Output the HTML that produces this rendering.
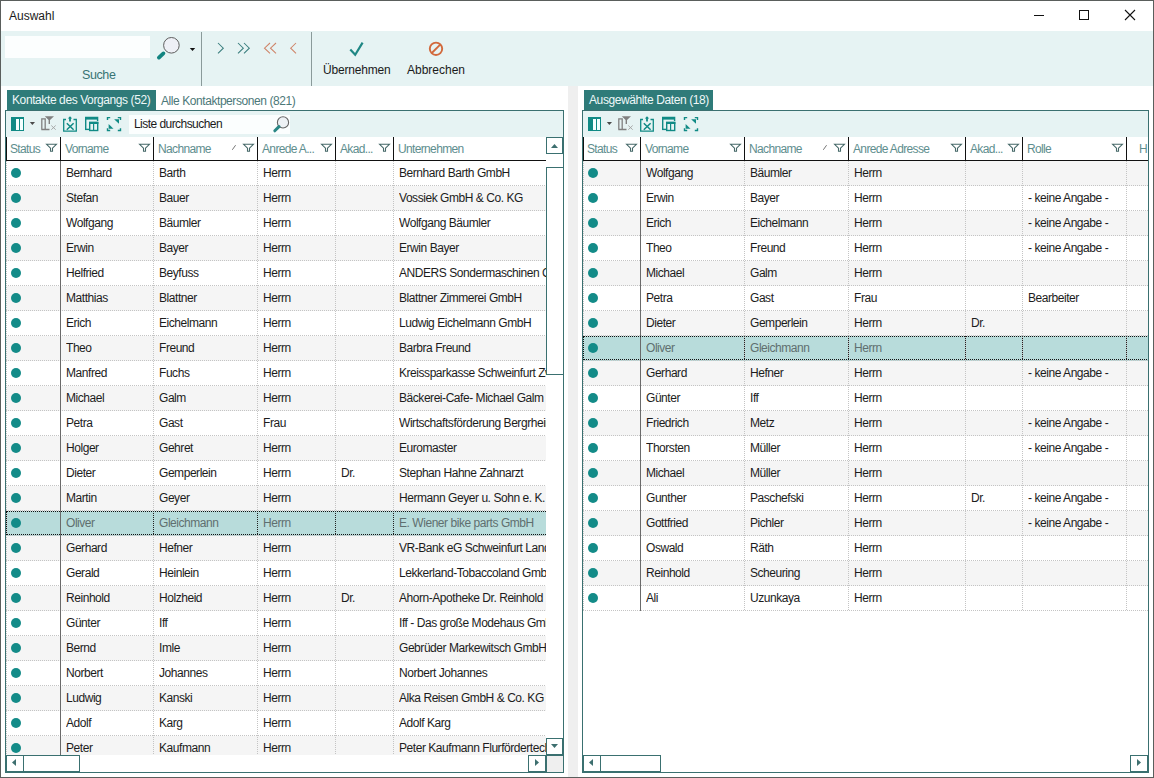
<!DOCTYPE html><html><head><meta charset="utf-8"><style>
*{margin:0;padding:0;box-sizing:border-box}
html,body{width:1154px;height:778px;overflow:hidden;background:#fff}
body{position:relative;font-family:"Liberation Sans",sans-serif;font-size:12px;color:#1e1e1e}
.a{position:absolute}
.ic{position:absolute;overflow:visible}
.hd{position:absolute;height:23px;line-height:24px;padding-left:5px;color:#5e8e8e;white-space:nowrap;overflow:hidden;letter-spacing:-0.65px}
.cell{position:absolute;height:25px;line-height:24px;white-space:nowrap;overflow:hidden;letter-spacing:-0.45px}
.dh{height:1px;background-image:linear-gradient(to right,#c4c4c4 50%,transparent 50%);background-size:2px 1px}
.dv{width:1px;background-image:linear-gradient(to bottom,#c4c4c4 50%,transparent 50%);background-size:1px 2px}
.dvk{width:1px;background-image:linear-gradient(to bottom,#222 50%,transparent 50%);background-size:1px 2px}
.dot{width:10px;height:10px;border-radius:50%;background:#138b88}
.tab{height:20px;line-height:21px;background:#2f7b79;color:#eef8f8;padding-left:5px;letter-spacing:-0.4px;white-space:nowrap}
</style></head><body><div class="a" style="left:9px;top:9px;line-height:14px;color:#1a1a1a">Auswahl</div><svg class="ic" style="left:1032px;top:8px" width="14" height="14" viewBox="0 0 14 14"><path d="M2 7.5 H12" stroke="#111" stroke-width="1"/></svg><svg class="ic" style="left:1077px;top:8px" width="14" height="14" viewBox="0 0 14 14"><rect x="2.5" y="2.5" width="9" height="9" fill="none" stroke="#111" stroke-width="1"/></svg><svg class="ic" style="left:1122px;top:8px" width="16" height="16" viewBox="0 0 16 16"><path d="M3 2 L13 12 M13 2 L3 12" stroke="#111" stroke-width="1.1"/></svg><div class="a" style="left:1px;top:31px;width:1152px;height:55px;background:#e6f3f3"></div><div class="a" style="left:5px;top:36px;width:145px;height:22px;background:#fcfefe"></div><div class="a" style="left:82px;top:68px;line-height:14px;color:#387474;font-size:12.5px;letter-spacing:-0.4px">Suche</div><svg class="ic" style="left:152px;top:34px" width="48" height="30" viewBox="0 0 48 30"><circle cx="19.4" cy="11.3" r="7.8" fill="#eef0f6" stroke="#5e5e5e" stroke-width="1"/><path d="M11.4 19.4 L6.9 23.6" stroke="#128480" stroke-width="3.8" stroke-linecap="round"/><path d="M37.8 14 H43.2 L40.5 16.9 Z" fill="#111"/></svg><div class="a" style="left:201px;top:32px;width:1px;height:54px;background:#8a9a9a"></div><div class="a" style="left:311px;top:32px;width:1px;height:54px;background:#8a9a9a"></div><svg class="ic" style="left:212px;top:40px" width="90" height="16" viewBox="0 0 90 16"><g fill="none" stroke-width="1.05"><path d="M6 3 L11.3 8.2 L6 13.4" stroke="#3b7f7f"/><path d="M26 3 L31.3 8.2 L26 13.4 M32 3 L37.3 8.2 L32 13.4" stroke="#3b7f7f"/><path d="M58 3 L52.5 8.2 L58 13.4 M64 3 L58.5 8.2 L64 13.4" stroke="#cf8468"/><path d="M84 3 L78.7 8.2 L84 13.4" stroke="#cf8468"/></g></svg><svg class="ic" style="left:345px;top:39px" width="20" height="18" viewBox="0 0 20 18"><path d="M5.3 10.4 L10.2 15.7 L17.6 3.6" fill="none" stroke="#1f8784" stroke-width="2.2"/></svg><div class="a" style="left:323px;top:63px;line-height:14px;color:#1a1a1a;letter-spacing:-0.2px">Übernehmen</div><svg class="ic" style="left:426px;top:39px" width="20" height="18" viewBox="0 0 20 18"><circle cx="10" cy="9.8" r="6.2" fill="none" stroke="#d2693c" stroke-width="1.9"/><path d="M5.8 14 L14.2 5.6" stroke="#d2693c" stroke-width="1.9"/></svg><div class="a" style="left:407px;top:63px;line-height:14px;color:#1a1a1a">Abbrechen</div><div class="a" style="left:568px;top:86px;width:10px;height:691px;background:#efefef"></div><div class="a" style="left:5px;top:110px;width:559px;height:663px;border:1px solid #3a7070;background:#fff"></div><div class="a" style="left:6px;top:111px;width:557px;height:26px;background:#e6f3f3"></div><svg class="ic" style="left:11px;top:116px" width="112" height="16" viewBox="0 0 112 16"><rect x="0" y="1" width="13" height="14" fill="#108a85"/><rect x="5" y="3" width="3" height="11" fill="#f4ffff"/><rect x="9" y="3" width="3" height="11" fill="#f4ffff"/><path d="M18.8 6 H24 L21.4 9 Z" fill="#4a4a4a"/><path d="M30.8 13.5 V2.8 H34.2 V13.5 M30.3 13.5 H38.5" fill="none" stroke="#808080" stroke-width="1.3"/><path d="M33.8 0.2 H43 L39 4 V8 L37.6 8 V4 Z" fill="#808080"/><path d="M40.3 9.5 L44.7 13.7 M44.7 9.5 L40.3 13.7" stroke="#a0a0a0" stroke-width="0.9"/><path d="M55 3.5 H52.7 V15.2 H65.3 V3.5 H62.5" fill="none" stroke="#108a85" stroke-width="1.3"/><path d="M59 0.2 L61.2 2.6 H59.9 V5.5 H58.1 V2.6 H56.8 Z" fill="#108a85"/><path d="M55.8 7.2 L62.6 13.8 M62.6 7.2 L55.8 13.8" stroke="#108a85" stroke-width="1.5"/><path d="M74.7 13.5 V1.5 H86.6 V5" fill="none" stroke="#108a85" stroke-width="1.4"/><rect x="74" y="1" width="13" height="2.6" fill="#108a85"/><path d="M74 13.4 H78" stroke="#108a85" stroke-width="1.4"/><rect x="78.7" y="6.5" width="8" height="8" fill="none" stroke="#108a85" stroke-width="1.4"/><rect x="78" y="5.8" width="9.4" height="2.2" fill="#108a85"/><path d="M82.6 7 V14.5" stroke="#108a85" stroke-width="1.2"/><path d="M96.5 4 V1.6 H99.2 M106.8 1.6 H109.5 V4 M109.5 12.2 V14.5 H106.8 M99.2 14.5 H96.5 V12.2" fill="none" stroke="#108a85" stroke-width="1.4"/><path d="M103.1 3.3 H108 V7.8 Z" fill="#108a85"/><path d="M97.6 8.1 V12.8 H102.5 Z" fill="#108a85"/></svg><div class="a" style="left:129px;top:115px;width:161px;height:19px;background:#fbfefe"></div><div class="a" style="left:134px;top:116px;line-height:17px;color:#1a1a1a;letter-spacing:-0.55px">Liste durchsuchen</div><svg class="ic" style="left:270px;top:114px" width="20" height="20" viewBox="0 0 20 20"><circle cx="13" cy="8.4" r="5.6" fill="#eef2f5" stroke="#666" stroke-width="1.1"/><path d="M9 12.6 L4.8 16.8" stroke="#2a8785" stroke-width="3" stroke-linecap="round"/></svg><div class="a" style="left:6px;top:161px;width:540px;height:594px;overflow:hidden"><div class="a" style="left:0px;top:0px;width:548px;height:25px;background:#fff"></div><div class="a dh" style="left:0;top:24px;width:548px"></div><div class="a dot" style="left:5px;top:7px"></div><div class="cell" style="left:60px;top:0px;width:87px;color:#1c1c1c">Bernhard</div><div class="cell" style="left:153px;top:0px;width:98px;color:#1c1c1c">Barth</div><div class="cell" style="left:257px;top:0px;width:72px;color:#1c1c1c">Herrn</div><div class="cell" style="left:393px;top:0px;width:154px;color:#1c1c1c">Bernhard Barth GmbH</div><div class="a" style="left:0px;top:25px;width:548px;height:25px;background:#f5f5f5"></div><div class="a dh" style="left:0;top:49px;width:548px"></div><div class="a dot" style="left:5px;top:32px"></div><div class="cell" style="left:60px;top:25px;width:87px;color:#1c1c1c">Stefan</div><div class="cell" style="left:153px;top:25px;width:98px;color:#1c1c1c">Bauer</div><div class="cell" style="left:257px;top:25px;width:72px;color:#1c1c1c">Herrn</div><div class="cell" style="left:393px;top:25px;width:154px;color:#1c1c1c">Vossiek GmbH &amp; Co. KG</div><div class="a" style="left:0px;top:50px;width:548px;height:25px;background:#fff"></div><div class="a dh" style="left:0;top:74px;width:548px"></div><div class="a dot" style="left:5px;top:57px"></div><div class="cell" style="left:60px;top:50px;width:87px;color:#1c1c1c">Wolfgang</div><div class="cell" style="left:153px;top:50px;width:98px;color:#1c1c1c">Bäumler</div><div class="cell" style="left:257px;top:50px;width:72px;color:#1c1c1c">Herrn</div><div class="cell" style="left:393px;top:50px;width:154px;color:#1c1c1c">Wolfgang Bäumler</div><div class="a" style="left:0px;top:75px;width:548px;height:25px;background:#f5f5f5"></div><div class="a dh" style="left:0;top:99px;width:548px"></div><div class="a dot" style="left:5px;top:82px"></div><div class="cell" style="left:60px;top:75px;width:87px;color:#1c1c1c">Erwin</div><div class="cell" style="left:153px;top:75px;width:98px;color:#1c1c1c">Bayer</div><div class="cell" style="left:257px;top:75px;width:72px;color:#1c1c1c">Herrn</div><div class="cell" style="left:393px;top:75px;width:154px;color:#1c1c1c">Erwin Bayer</div><div class="a" style="left:0px;top:100px;width:548px;height:25px;background:#fff"></div><div class="a dh" style="left:0;top:124px;width:548px"></div><div class="a dot" style="left:5px;top:107px"></div><div class="cell" style="left:60px;top:100px;width:87px;color:#1c1c1c">Helfried</div><div class="cell" style="left:153px;top:100px;width:98px;color:#1c1c1c">Beyfuss</div><div class="cell" style="left:257px;top:100px;width:72px;color:#1c1c1c">Herrn</div><div class="cell" style="left:393px;top:100px;width:154px;color:#1c1c1c">ANDERS Sondermaschinen GmbH</div><div class="a" style="left:0px;top:125px;width:548px;height:25px;background:#f5f5f5"></div><div class="a dh" style="left:0;top:149px;width:548px"></div><div class="a dot" style="left:5px;top:132px"></div><div class="cell" style="left:60px;top:125px;width:87px;color:#1c1c1c">Matthias</div><div class="cell" style="left:153px;top:125px;width:98px;color:#1c1c1c">Blattner</div><div class="cell" style="left:257px;top:125px;width:72px;color:#1c1c1c">Herrn</div><div class="cell" style="left:393px;top:125px;width:154px;color:#1c1c1c">Blattner Zimmerei GmbH</div><div class="a" style="left:0px;top:150px;width:548px;height:25px;background:#fff"></div><div class="a dh" style="left:0;top:174px;width:548px"></div><div class="a dot" style="left:5px;top:157px"></div><div class="cell" style="left:60px;top:150px;width:87px;color:#1c1c1c">Erich</div><div class="cell" style="left:153px;top:150px;width:98px;color:#1c1c1c">Eichelmann</div><div class="cell" style="left:257px;top:150px;width:72px;color:#1c1c1c">Herrn</div><div class="cell" style="left:393px;top:150px;width:154px;color:#1c1c1c">Ludwig Eichelmann GmbH</div><div class="a" style="left:0px;top:175px;width:548px;height:25px;background:#f5f5f5"></div><div class="a dh" style="left:0;top:199px;width:548px"></div><div class="a dot" style="left:5px;top:182px"></div><div class="cell" style="left:60px;top:175px;width:87px;color:#1c1c1c">Theo</div><div class="cell" style="left:153px;top:175px;width:98px;color:#1c1c1c">Freund</div><div class="cell" style="left:257px;top:175px;width:72px;color:#1c1c1c">Herrn</div><div class="cell" style="left:393px;top:175px;width:154px;color:#1c1c1c">Barbra Freund</div><div class="a" style="left:0px;top:200px;width:548px;height:25px;background:#fff"></div><div class="a dh" style="left:0;top:224px;width:548px"></div><div class="a dot" style="left:5px;top:207px"></div><div class="cell" style="left:60px;top:200px;width:87px;color:#1c1c1c">Manfred</div><div class="cell" style="left:153px;top:200px;width:98px;color:#1c1c1c">Fuchs</div><div class="cell" style="left:257px;top:200px;width:72px;color:#1c1c1c">Herrn</div><div class="cell" style="left:393px;top:200px;width:154px;color:#1c1c1c">Kreissparkasse Schweinfurt Zweigstelle</div><div class="a" style="left:0px;top:225px;width:548px;height:25px;background:#f5f5f5"></div><div class="a dh" style="left:0;top:249px;width:548px"></div><div class="a dot" style="left:5px;top:232px"></div><div class="cell" style="left:60px;top:225px;width:87px;color:#1c1c1c">Michael</div><div class="cell" style="left:153px;top:225px;width:98px;color:#1c1c1c">Galm</div><div class="cell" style="left:257px;top:225px;width:72px;color:#1c1c1c">Herrn</div><div class="cell" style="left:393px;top:225px;width:154px;color:#1c1c1c">Bäckerei-Cafe- Michael Galm</div><div class="a" style="left:0px;top:250px;width:548px;height:25px;background:#fff"></div><div class="a dh" style="left:0;top:274px;width:548px"></div><div class="a dot" style="left:5px;top:257px"></div><div class="cell" style="left:60px;top:250px;width:87px;color:#1c1c1c">Petra</div><div class="cell" style="left:153px;top:250px;width:98px;color:#1c1c1c">Gast</div><div class="cell" style="left:257px;top:250px;width:72px;color:#1c1c1c">Frau</div><div class="cell" style="left:393px;top:250px;width:154px;color:#1c1c1c">Wirtschaftsförderung  Bergrheinfeld</div><div class="a" style="left:0px;top:275px;width:548px;height:25px;background:#f5f5f5"></div><div class="a dh" style="left:0;top:299px;width:548px"></div><div class="a dot" style="left:5px;top:282px"></div><div class="cell" style="left:60px;top:275px;width:87px;color:#1c1c1c">Holger</div><div class="cell" style="left:153px;top:275px;width:98px;color:#1c1c1c">Gehret</div><div class="cell" style="left:257px;top:275px;width:72px;color:#1c1c1c">Herrn</div><div class="cell" style="left:393px;top:275px;width:154px;color:#1c1c1c">Euromaster</div><div class="a" style="left:0px;top:300px;width:548px;height:25px;background:#fff"></div><div class="a dh" style="left:0;top:324px;width:548px"></div><div class="a dot" style="left:5px;top:307px"></div><div class="cell" style="left:60px;top:300px;width:87px;color:#1c1c1c">Dieter</div><div class="cell" style="left:153px;top:300px;width:98px;color:#1c1c1c">Gemperlein</div><div class="cell" style="left:257px;top:300px;width:72px;color:#1c1c1c">Herrn</div><div class="cell" style="left:335px;top:300px;width:52px;color:#1c1c1c">Dr.</div><div class="cell" style="left:393px;top:300px;width:154px;color:#1c1c1c">Stephan Hahne Zahnarzt</div><div class="a" style="left:0px;top:325px;width:548px;height:25px;background:#f5f5f5"></div><div class="a dh" style="left:0;top:349px;width:548px"></div><div class="a dot" style="left:5px;top:332px"></div><div class="cell" style="left:60px;top:325px;width:87px;color:#1c1c1c">Martin</div><div class="cell" style="left:153px;top:325px;width:98px;color:#1c1c1c">Geyer</div><div class="cell" style="left:257px;top:325px;width:72px;color:#1c1c1c">Herrn</div><div class="cell" style="left:393px;top:325px;width:154px;color:#1c1c1c">Hermann Geyer u. Sohn e. K.</div><div class="a" style="left:0px;top:350px;width:548px;height:25px;background:#b8dcdb"></div><div class="a dh" style="left:0;top:374px;width:548px"></div><div class="a dot" style="left:5px;top:357px"></div><div class="cell" style="left:60px;top:350px;width:87px;color:#5f6f6f">Oliver</div><div class="cell" style="left:153px;top:350px;width:98px;color:#5f6f6f">Gleichmann</div><div class="cell" style="left:257px;top:350px;width:72px;color:#5f6f6f">Herrn</div><div class="cell" style="left:393px;top:350px;width:154px;color:#5f6f6f">E. Wiener bike parts GmbH</div><div class="a" style="left:0px;top:375px;width:548px;height:25px;background:#f5f5f5"></div><div class="a dh" style="left:0;top:399px;width:548px"></div><div class="a dot" style="left:5px;top:382px"></div><div class="cell" style="left:60px;top:375px;width:87px;color:#1c1c1c">Gerhard</div><div class="cell" style="left:153px;top:375px;width:98px;color:#1c1c1c">Hefner</div><div class="cell" style="left:257px;top:375px;width:72px;color:#1c1c1c">Herrn</div><div class="cell" style="left:393px;top:375px;width:154px;color:#1c1c1c">VR-Bank eG Schweinfurt Land</div><div class="a" style="left:0px;top:400px;width:548px;height:25px;background:#fff"></div><div class="a dh" style="left:0;top:424px;width:548px"></div><div class="a dot" style="left:5px;top:407px"></div><div class="cell" style="left:60px;top:400px;width:87px;color:#1c1c1c">Gerald</div><div class="cell" style="left:153px;top:400px;width:98px;color:#1c1c1c">Heinlein</div><div class="cell" style="left:257px;top:400px;width:72px;color:#1c1c1c">Herrn</div><div class="cell" style="left:393px;top:400px;width:154px;color:#1c1c1c">Lekkerland-Tobaccoland GmbH</div><div class="a" style="left:0px;top:425px;width:548px;height:25px;background:#f5f5f5"></div><div class="a dh" style="left:0;top:449px;width:548px"></div><div class="a dot" style="left:5px;top:432px"></div><div class="cell" style="left:60px;top:425px;width:87px;color:#1c1c1c">Reinhold</div><div class="cell" style="left:153px;top:425px;width:98px;color:#1c1c1c">Holzheid</div><div class="cell" style="left:257px;top:425px;width:72px;color:#1c1c1c">Herrn</div><div class="cell" style="left:335px;top:425px;width:52px;color:#1c1c1c">Dr.</div><div class="cell" style="left:393px;top:425px;width:154px;color:#1c1c1c">Ahorn-Apotheke Dr. Reinhold</div><div class="a" style="left:0px;top:450px;width:548px;height:25px;background:#fff"></div><div class="a dh" style="left:0;top:474px;width:548px"></div><div class="a dot" style="left:5px;top:457px"></div><div class="cell" style="left:60px;top:450px;width:87px;color:#1c1c1c">Günter</div><div class="cell" style="left:153px;top:450px;width:98px;color:#1c1c1c">Iff</div><div class="cell" style="left:257px;top:450px;width:72px;color:#1c1c1c">Herrn</div><div class="cell" style="left:393px;top:450px;width:154px;color:#1c1c1c">Iff - Das große Modehaus GmbH</div><div class="a" style="left:0px;top:475px;width:548px;height:25px;background:#f5f5f5"></div><div class="a dh" style="left:0;top:499px;width:548px"></div><div class="a dot" style="left:5px;top:482px"></div><div class="cell" style="left:60px;top:475px;width:87px;color:#1c1c1c">Bernd</div><div class="cell" style="left:153px;top:475px;width:98px;color:#1c1c1c">Imle</div><div class="cell" style="left:257px;top:475px;width:72px;color:#1c1c1c">Herrn</div><div class="cell" style="left:393px;top:475px;width:154px;color:#1c1c1c">Gebrüder Markewitsch GmbH</div><div class="a" style="left:0px;top:500px;width:548px;height:25px;background:#fff"></div><div class="a dh" style="left:0;top:524px;width:548px"></div><div class="a dot" style="left:5px;top:507px"></div><div class="cell" style="left:60px;top:500px;width:87px;color:#1c1c1c">Norbert</div><div class="cell" style="left:153px;top:500px;width:98px;color:#1c1c1c">Johannes</div><div class="cell" style="left:257px;top:500px;width:72px;color:#1c1c1c">Herrn</div><div class="cell" style="left:393px;top:500px;width:154px;color:#1c1c1c">Norbert Johannes</div><div class="a" style="left:0px;top:525px;width:548px;height:25px;background:#f5f5f5"></div><div class="a dh" style="left:0;top:549px;width:548px"></div><div class="a dot" style="left:5px;top:532px"></div><div class="cell" style="left:60px;top:525px;width:87px;color:#1c1c1c">Ludwig</div><div class="cell" style="left:153px;top:525px;width:98px;color:#1c1c1c">Kanski</div><div class="cell" style="left:257px;top:525px;width:72px;color:#1c1c1c">Herrn</div><div class="cell" style="left:393px;top:525px;width:154px;color:#1c1c1c">Alka Reisen GmbH &amp; Co. KG</div><div class="a" style="left:0px;top:550px;width:548px;height:25px;background:#fff"></div><div class="a dh" style="left:0;top:574px;width:548px"></div><div class="a dot" style="left:5px;top:557px"></div><div class="cell" style="left:60px;top:550px;width:87px;color:#1c1c1c">Adolf</div><div class="cell" style="left:153px;top:550px;width:98px;color:#1c1c1c">Karg</div><div class="cell" style="left:257px;top:550px;width:72px;color:#1c1c1c">Herrn</div><div class="cell" style="left:393px;top:550px;width:154px;color:#1c1c1c">Adolf Karg</div><div class="a" style="left:0px;top:575px;width:548px;height:25px;background:#f5f5f5"></div><div class="a dh" style="left:0;top:599px;width:548px"></div><div class="a dot" style="left:5px;top:582px"></div><div class="cell" style="left:60px;top:575px;width:87px;color:#1c1c1c">Peter</div><div class="cell" style="left:153px;top:575px;width:98px;color:#1c1c1c">Kaufmann</div><div class="cell" style="left:257px;top:575px;width:72px;color:#1c1c1c">Herrn</div><div class="cell" style="left:393px;top:575px;width:154px;color:#1c1c1c">Peter Kaufmann Flurfördertechnik</div><div class="a" style="left:54px;top:0px;width:1px;height:600px;background:#6a6a6a"></div><div class="a dv" style="left:147px;top:0;height:600px"></div><div class="a dv" style="left:251px;top:0;height:600px"></div><div class="a dv" style="left:329px;top:0;height:600px"></div><div class="a dv" style="left:387px;top:0;height:600px"></div><div class="a dv" style="left:547px;top:0;height:600px"></div><div class="a dv" style="left:0px;top:0;height:600px"></div><div class="a" style="left:0px;top:350px;width:548px;height:24px;border:1px dotted #111"></div><div class="a dvk" style="left:147px;top:350px;height:24px"></div><div class="a dvk" style="left:251px;top:350px;height:24px"></div><div class="a dvk" style="left:329px;top:350px;height:24px"></div><div class="a dvk" style="left:387px;top:350px;height:24px"></div></div><div class="a" style="left:6px;top:137px;width:540px;height:23px;background:#fff"></div><div class="a" style="left:6px;top:160px;width:540px;height:1px;background:#111"></div><div class="a" style="left:6px;top:137px;width:1px;height:24px;background:#111"></div><div class="hd" style="left:6px;top:137px;width:35px;padding-left:4px">Status</div><svg class="ic" style="left:46px;top:143px" width="12" height="10" viewBox="0 0 12 10"><path d="M0.6 1.3 H10.4 L6.5 5.2 V8.3 H4.5 V5.2 Z" fill="none" stroke="#456868" stroke-width="1.1" stroke-linejoin="miter"/></svg><div class="a" style="left:60px;top:137px;width:1px;height:24px;background:#111"></div><div class="hd" style="left:60px;top:137px;width:74px;">Vorname</div><svg class="ic" style="left:139px;top:143px" width="12" height="10" viewBox="0 0 12 10"><path d="M0.6 1.3 H10.4 L6.5 5.2 V8.3 H4.5 V5.2 Z" fill="none" stroke="#456868" stroke-width="1.1" stroke-linejoin="miter"/></svg><div class="a" style="left:153px;top:137px;width:1px;height:24px;background:#111"></div><div class="hd" style="left:153px;top:137px;width:85px;">Nachname</div><svg class="ic" style="left:243px;top:143px" width="12" height="10" viewBox="0 0 12 10"><path d="M0.6 1.3 H10.4 L6.5 5.2 V8.3 H4.5 V5.2 Z" fill="none" stroke="#456868" stroke-width="1.1" stroke-linejoin="miter"/></svg><svg class="ic" style="left:232px;top:144px" width="6" height="7" viewBox="0 0 6 7"><path d="M0.3 5.8 L3.6 1.2" stroke="#777" stroke-width="1"/></svg><div class="a" style="left:257px;top:137px;width:1px;height:24px;background:#111"></div><div class="hd" style="left:257px;top:137px;width:59px;">Anrede A...</div><svg class="ic" style="left:321px;top:143px" width="12" height="10" viewBox="0 0 12 10"><path d="M0.6 1.3 H10.4 L6.5 5.2 V8.3 H4.5 V5.2 Z" fill="none" stroke="#456868" stroke-width="1.1" stroke-linejoin="miter"/></svg><div class="a" style="left:335px;top:137px;width:1px;height:24px;background:#111"></div><div class="hd" style="left:335px;top:137px;width:39px;">Akad...</div><svg class="ic" style="left:379px;top:143px" width="12" height="10" viewBox="0 0 12 10"><path d="M0.6 1.3 H10.4 L6.5 5.2 V8.3 H4.5 V5.2 Z" fill="none" stroke="#456868" stroke-width="1.1" stroke-linejoin="miter"/></svg><div class="a" style="left:393px;top:137px;width:1px;height:24px;background:#111"></div><div class="hd" style="left:393px;top:137px;width:158px;">Unternehmen</div><div class="a" style="left:546px;top:137px;width:17px;height:17px;border:1px solid #3a7070;background:#fff"></div><svg class="ic" style="left:551px;top:144px" width="7" height="4" viewBox="0 0 7 4"><path d="M0 4 L3.5 0 L7 4 Z" fill="#3d6f6f"/></svg><div class="a" style="left:546px;top:167px;width:17px;height:208px;border:1px solid #3a7070;border-right:0;background:#fff"></div><div class="a" style="left:546px;top:738px;width:17px;height:17px;border:1px solid #3a7070;background:#fff"></div><svg class="ic" style="left:551px;top:744px" width="7" height="4" viewBox="0 0 7 4"><path d="M0 0 L7 0 L3.5 4 Z" fill="#3d6f6f"/></svg><div class="a" style="left:546px;top:755px;width:17px;height:17px;background:#efefef;border-left:1px solid #3a7070;border-top:1px solid #3a7070"></div><div class="a" style="left:6px;top:755px;width:540px;height:17px;background:#fff"></div><div class="a" style="left:6px;top:755px;width:18px;height:17px;border:1px solid #3a7070;background:#fff"></div><svg class="ic" style="left:12px;top:759px" width="4" height="7" viewBox="0 0 4 7"><path d="M4 0 L4 7 L0 3.5 Z" fill="#3d6f6f"/></svg><div class="a" style="left:23px;top:755px;width:57px;height:17px;border:1px solid #3a7070;background:#fff"></div><div class="a" style="left:528px;top:755px;width:18px;height:17px;border:1px solid #3a7070;background:#fff"></div><svg class="ic" style="left:535px;top:759px" width="4" height="7" viewBox="0 0 4 7"><path d="M0 0 L4 3.5 L0 7 Z" fill="#3d6f6f"/></svg><div class="a" style="left:582px;top:110px;width:567px;height:663px;border:1px solid #3a7070;background:#fff"></div><div class="a" style="left:583px;top:111px;width:565px;height:26px;background:#e6f3f3"></div><svg class="ic" style="left:588px;top:116px" width="112" height="16" viewBox="0 0 112 16"><rect x="0" y="1" width="13" height="14" fill="#108a85"/><rect x="5" y="3" width="3" height="11" fill="#f4ffff"/><rect x="9" y="3" width="3" height="11" fill="#f4ffff"/><path d="M18.8 6 H24 L21.4 9 Z" fill="#4a4a4a"/><path d="M30.8 13.5 V2.8 H34.2 V13.5 M30.3 13.5 H38.5" fill="none" stroke="#808080" stroke-width="1.3"/><path d="M33.8 0.2 H43 L39 4 V8 L37.6 8 V4 Z" fill="#808080"/><path d="M40.3 9.5 L44.7 13.7 M44.7 9.5 L40.3 13.7" stroke="#a0a0a0" stroke-width="0.9"/><path d="M55 3.5 H52.7 V15.2 H65.3 V3.5 H62.5" fill="none" stroke="#108a85" stroke-width="1.3"/><path d="M59 0.2 L61.2 2.6 H59.9 V5.5 H58.1 V2.6 H56.8 Z" fill="#108a85"/><path d="M55.8 7.2 L62.6 13.8 M62.6 7.2 L55.8 13.8" stroke="#108a85" stroke-width="1.5"/><path d="M74.7 13.5 V1.5 H86.6 V5" fill="none" stroke="#108a85" stroke-width="1.4"/><rect x="74" y="1" width="13" height="2.6" fill="#108a85"/><path d="M74 13.4 H78" stroke="#108a85" stroke-width="1.4"/><rect x="78.7" y="6.5" width="8" height="8" fill="none" stroke="#108a85" stroke-width="1.4"/><rect x="78" y="5.8" width="9.4" height="2.2" fill="#108a85"/><path d="M82.6 7 V14.5" stroke="#108a85" stroke-width="1.2"/><path d="M96.5 4 V1.6 H99.2 M106.8 1.6 H109.5 V4 M109.5 12.2 V14.5 H106.8 M99.2 14.5 H96.5 V12.2" fill="none" stroke="#108a85" stroke-width="1.4"/><path d="M103.1 3.3 H108 V7.8 Z" fill="#108a85"/><path d="M97.6 8.1 V12.8 H102.5 Z" fill="#108a85"/></svg><div class="a" style="left:583px;top:161px;width:565px;height:594px;overflow:hidden"><div class="a" style="left:0px;top:0px;width:604px;height:25px;background:#f5f5f5"></div><div class="a dh" style="left:0;top:24px;width:604px"></div><div class="a dot" style="left:5px;top:7px"></div><div class="cell" style="left:63px;top:0px;width:98px;color:#1c1c1c">Wolfgang</div><div class="cell" style="left:167px;top:0px;width:98px;color:#1c1c1c">Bäumler</div><div class="cell" style="left:271px;top:0px;width:111px;color:#1c1c1c">Herrn</div><div class="a" style="left:0px;top:25px;width:604px;height:25px;background:#fff"></div><div class="a dh" style="left:0;top:49px;width:604px"></div><div class="a dot" style="left:5px;top:32px"></div><div class="cell" style="left:63px;top:25px;width:98px;color:#1c1c1c">Erwin</div><div class="cell" style="left:167px;top:25px;width:98px;color:#1c1c1c">Bayer</div><div class="cell" style="left:271px;top:25px;width:111px;color:#1c1c1c">Herrn</div><div class="cell" style="left:445px;top:25px;width:98px;color:#1c1c1c">- keine Angabe -</div><div class="a" style="left:0px;top:50px;width:604px;height:25px;background:#f5f5f5"></div><div class="a dh" style="left:0;top:74px;width:604px"></div><div class="a dot" style="left:5px;top:57px"></div><div class="cell" style="left:63px;top:50px;width:98px;color:#1c1c1c">Erich</div><div class="cell" style="left:167px;top:50px;width:98px;color:#1c1c1c">Eichelmann</div><div class="cell" style="left:271px;top:50px;width:111px;color:#1c1c1c">Herrn</div><div class="cell" style="left:445px;top:50px;width:98px;color:#1c1c1c">- keine Angabe -</div><div class="a" style="left:0px;top:75px;width:604px;height:25px;background:#fff"></div><div class="a dh" style="left:0;top:99px;width:604px"></div><div class="a dot" style="left:5px;top:82px"></div><div class="cell" style="left:63px;top:75px;width:98px;color:#1c1c1c">Theo</div><div class="cell" style="left:167px;top:75px;width:98px;color:#1c1c1c">Freund</div><div class="cell" style="left:271px;top:75px;width:111px;color:#1c1c1c">Herrn</div><div class="cell" style="left:445px;top:75px;width:98px;color:#1c1c1c">- keine Angabe -</div><div class="a" style="left:0px;top:100px;width:604px;height:25px;background:#f5f5f5"></div><div class="a dh" style="left:0;top:124px;width:604px"></div><div class="a dot" style="left:5px;top:107px"></div><div class="cell" style="left:63px;top:100px;width:98px;color:#1c1c1c">Michael</div><div class="cell" style="left:167px;top:100px;width:98px;color:#1c1c1c">Galm</div><div class="cell" style="left:271px;top:100px;width:111px;color:#1c1c1c">Herrn</div><div class="a" style="left:0px;top:125px;width:604px;height:25px;background:#fff"></div><div class="a dh" style="left:0;top:149px;width:604px"></div><div class="a dot" style="left:5px;top:132px"></div><div class="cell" style="left:63px;top:125px;width:98px;color:#1c1c1c">Petra</div><div class="cell" style="left:167px;top:125px;width:98px;color:#1c1c1c">Gast</div><div class="cell" style="left:271px;top:125px;width:111px;color:#1c1c1c">Frau</div><div class="cell" style="left:445px;top:125px;width:98px;color:#1c1c1c">Bearbeiter</div><div class="a" style="left:0px;top:150px;width:604px;height:25px;background:#f5f5f5"></div><div class="a dh" style="left:0;top:174px;width:604px"></div><div class="a dot" style="left:5px;top:157px"></div><div class="cell" style="left:63px;top:150px;width:98px;color:#1c1c1c">Dieter</div><div class="cell" style="left:167px;top:150px;width:98px;color:#1c1c1c">Gemperlein</div><div class="cell" style="left:271px;top:150px;width:111px;color:#1c1c1c">Herrn</div><div class="cell" style="left:388px;top:150px;width:51px;color:#1c1c1c">Dr.</div><div class="a" style="left:0px;top:175px;width:604px;height:25px;background:#b8dcdb"></div><div class="a dh" style="left:0;top:199px;width:604px"></div><div class="a dot" style="left:5px;top:182px"></div><div class="cell" style="left:63px;top:175px;width:98px;color:#5f6f6f">Oliver</div><div class="cell" style="left:167px;top:175px;width:98px;color:#5f6f6f">Gleichmann</div><div class="cell" style="left:271px;top:175px;width:111px;color:#5f6f6f">Herrn</div><div class="a" style="left:0px;top:200px;width:604px;height:25px;background:#f5f5f5"></div><div class="a dh" style="left:0;top:224px;width:604px"></div><div class="a dot" style="left:5px;top:207px"></div><div class="cell" style="left:63px;top:200px;width:98px;color:#1c1c1c">Gerhard</div><div class="cell" style="left:167px;top:200px;width:98px;color:#1c1c1c">Hefner</div><div class="cell" style="left:271px;top:200px;width:111px;color:#1c1c1c">Herrn</div><div class="cell" style="left:445px;top:200px;width:98px;color:#1c1c1c">- keine Angabe -</div><div class="a" style="left:0px;top:225px;width:604px;height:25px;background:#fff"></div><div class="a dh" style="left:0;top:249px;width:604px"></div><div class="a dot" style="left:5px;top:232px"></div><div class="cell" style="left:63px;top:225px;width:98px;color:#1c1c1c">Günter</div><div class="cell" style="left:167px;top:225px;width:98px;color:#1c1c1c">Iff</div><div class="cell" style="left:271px;top:225px;width:111px;color:#1c1c1c">Herrn</div><div class="a" style="left:0px;top:250px;width:604px;height:25px;background:#f5f5f5"></div><div class="a dh" style="left:0;top:274px;width:604px"></div><div class="a dot" style="left:5px;top:257px"></div><div class="cell" style="left:63px;top:250px;width:98px;color:#1c1c1c">Friedrich</div><div class="cell" style="left:167px;top:250px;width:98px;color:#1c1c1c">Metz</div><div class="cell" style="left:271px;top:250px;width:111px;color:#1c1c1c">Herrn</div><div class="cell" style="left:445px;top:250px;width:98px;color:#1c1c1c">- keine Angabe -</div><div class="a" style="left:0px;top:275px;width:604px;height:25px;background:#fff"></div><div class="a dh" style="left:0;top:299px;width:604px"></div><div class="a dot" style="left:5px;top:282px"></div><div class="cell" style="left:63px;top:275px;width:98px;color:#1c1c1c">Thorsten</div><div class="cell" style="left:167px;top:275px;width:98px;color:#1c1c1c">Müller</div><div class="cell" style="left:271px;top:275px;width:111px;color:#1c1c1c">Herrn</div><div class="cell" style="left:445px;top:275px;width:98px;color:#1c1c1c">- keine Angabe -</div><div class="a" style="left:0px;top:300px;width:604px;height:25px;background:#f5f5f5"></div><div class="a dh" style="left:0;top:324px;width:604px"></div><div class="a dot" style="left:5px;top:307px"></div><div class="cell" style="left:63px;top:300px;width:98px;color:#1c1c1c">Michael</div><div class="cell" style="left:167px;top:300px;width:98px;color:#1c1c1c">Müller</div><div class="cell" style="left:271px;top:300px;width:111px;color:#1c1c1c">Herrn</div><div class="a" style="left:0px;top:325px;width:604px;height:25px;background:#fff"></div><div class="a dh" style="left:0;top:349px;width:604px"></div><div class="a dot" style="left:5px;top:332px"></div><div class="cell" style="left:63px;top:325px;width:98px;color:#1c1c1c">Gunther</div><div class="cell" style="left:167px;top:325px;width:98px;color:#1c1c1c">Paschefski</div><div class="cell" style="left:271px;top:325px;width:111px;color:#1c1c1c">Herrn</div><div class="cell" style="left:388px;top:325px;width:51px;color:#1c1c1c">Dr.</div><div class="cell" style="left:445px;top:325px;width:98px;color:#1c1c1c">- keine Angabe -</div><div class="a" style="left:0px;top:350px;width:604px;height:25px;background:#f5f5f5"></div><div class="a dh" style="left:0;top:374px;width:604px"></div><div class="a dot" style="left:5px;top:357px"></div><div class="cell" style="left:63px;top:350px;width:98px;color:#1c1c1c">Gottfried</div><div class="cell" style="left:167px;top:350px;width:98px;color:#1c1c1c">Pichler</div><div class="cell" style="left:271px;top:350px;width:111px;color:#1c1c1c">Herrn</div><div class="cell" style="left:445px;top:350px;width:98px;color:#1c1c1c">- keine Angabe -</div><div class="a" style="left:0px;top:375px;width:604px;height:25px;background:#fff"></div><div class="a dh" style="left:0;top:399px;width:604px"></div><div class="a dot" style="left:5px;top:382px"></div><div class="cell" style="left:63px;top:375px;width:98px;color:#1c1c1c">Oswald</div><div class="cell" style="left:167px;top:375px;width:98px;color:#1c1c1c">Räth</div><div class="cell" style="left:271px;top:375px;width:111px;color:#1c1c1c">Herrn</div><div class="a" style="left:0px;top:400px;width:604px;height:25px;background:#f5f5f5"></div><div class="a dh" style="left:0;top:424px;width:604px"></div><div class="a dot" style="left:5px;top:407px"></div><div class="cell" style="left:63px;top:400px;width:98px;color:#1c1c1c">Reinhold</div><div class="cell" style="left:167px;top:400px;width:98px;color:#1c1c1c">Scheuring</div><div class="cell" style="left:271px;top:400px;width:111px;color:#1c1c1c">Herrn</div><div class="a" style="left:0px;top:425px;width:604px;height:25px;background:#fff"></div><div class="a dh" style="left:0;top:449px;width:604px"></div><div class="a dot" style="left:5px;top:432px"></div><div class="cell" style="left:63px;top:425px;width:98px;color:#1c1c1c">Ali</div><div class="cell" style="left:167px;top:425px;width:98px;color:#1c1c1c">Uzunkaya</div><div class="cell" style="left:271px;top:425px;width:111px;color:#1c1c1c">Herrn</div><div class="a" style="left:57px;top:0px;width:1px;height:450px;background:#6a6a6a"></div><div class="a dv" style="left:161px;top:0;height:450px"></div><div class="a dv" style="left:265px;top:0;height:450px"></div><div class="a dv" style="left:382px;top:0;height:450px"></div><div class="a dv" style="left:439px;top:0;height:450px"></div><div class="a dv" style="left:543px;top:0;height:450px"></div><div class="a dv" style="left:603px;top:0;height:450px"></div><div class="a dv" style="left:0px;top:0;height:450px"></div><div class="a" style="left:0px;top:175px;width:604px;height:24px;border:1px dotted #111"></div><div class="a dvk" style="left:161px;top:175px;height:24px"></div><div class="a dvk" style="left:265px;top:175px;height:24px"></div><div class="a dvk" style="left:382px;top:175px;height:24px"></div><div class="a dvk" style="left:439px;top:175px;height:24px"></div><div class="a dvk" style="left:543px;top:175px;height:24px"></div></div><div class="a" style="left:583px;top:137px;width:565px;height:23px;background:#fff"></div><div class="a" style="left:583px;top:160px;width:565px;height:1px;background:#111"></div><div class="a" style="left:583px;top:137px;width:1px;height:24px;background:#111"></div><div class="hd" style="left:583px;top:137px;width:38px;padding-left:4px">Status</div><svg class="ic" style="left:626px;top:143px" width="12" height="10" viewBox="0 0 12 10"><path d="M0.6 1.3 H10.4 L6.5 5.2 V8.3 H4.5 V5.2 Z" fill="none" stroke="#456868" stroke-width="1.1" stroke-linejoin="miter"/></svg><div class="a" style="left:640px;top:137px;width:1px;height:24px;background:#111"></div><div class="hd" style="left:640px;top:137px;width:85px;">Vorname</div><svg class="ic" style="left:730px;top:143px" width="12" height="10" viewBox="0 0 12 10"><path d="M0.6 1.3 H10.4 L6.5 5.2 V8.3 H4.5 V5.2 Z" fill="none" stroke="#456868" stroke-width="1.1" stroke-linejoin="miter"/></svg><div class="a" style="left:744px;top:137px;width:1px;height:24px;background:#111"></div><div class="hd" style="left:744px;top:137px;width:85px;">Nachname</div><svg class="ic" style="left:834px;top:143px" width="12" height="10" viewBox="0 0 12 10"><path d="M0.6 1.3 H10.4 L6.5 5.2 V8.3 H4.5 V5.2 Z" fill="none" stroke="#456868" stroke-width="1.1" stroke-linejoin="miter"/></svg><svg class="ic" style="left:823px;top:144px" width="6" height="7" viewBox="0 0 6 7"><path d="M0.3 5.8 L3.6 1.2" stroke="#777" stroke-width="1"/></svg><div class="a" style="left:848px;top:137px;width:1px;height:24px;background:#111"></div><div class="hd" style="left:848px;top:137px;width:98px;">Anrede Adresse</div><svg class="ic" style="left:951px;top:143px" width="12" height="10" viewBox="0 0 12 10"><path d="M0.6 1.3 H10.4 L6.5 5.2 V8.3 H4.5 V5.2 Z" fill="none" stroke="#456868" stroke-width="1.1" stroke-linejoin="miter"/></svg><div class="a" style="left:965px;top:137px;width:1px;height:24px;background:#111"></div><div class="hd" style="left:965px;top:137px;width:38px;">Akad...</div><svg class="ic" style="left:1008px;top:143px" width="12" height="10" viewBox="0 0 12 10"><path d="M0.6 1.3 H10.4 L6.5 5.2 V8.3 H4.5 V5.2 Z" fill="none" stroke="#456868" stroke-width="1.1" stroke-linejoin="miter"/></svg><div class="a" style="left:1022px;top:137px;width:1px;height:24px;background:#111"></div><div class="hd" style="left:1022px;top:137px;width:85px;">Rolle</div><svg class="ic" style="left:1112px;top:143px" width="12" height="10" viewBox="0 0 12 10"><path d="M0.6 1.3 H10.4 L6.5 5.2 V8.3 H4.5 V5.2 Z" fill="none" stroke="#456868" stroke-width="1.1" stroke-linejoin="miter"/></svg><div class="a" style="left:1126px;top:137px;width:1px;height:24px;background:#111"></div><div class="hd" style="left:1126px;top:137px;width:58px;">&nbsp;&nbsp;&nbsp;H</div><div class="a" style="left:583px;top:755px;width:565px;height:17px;background:#fff"></div><div class="a" style="left:583px;top:755px;width:18px;height:17px;border:1px solid #3a7070;background:#fff"></div><svg class="ic" style="left:589px;top:759px" width="4" height="7" viewBox="0 0 4 7"><path d="M4 0 L4 7 L0 3.5 Z" fill="#3d6f6f"/></svg><div class="a" style="left:600px;top:755px;width:61px;height:17px;border:1px solid #3a7070;background:#fff"></div><div class="a" style="left:1130px;top:755px;width:18px;height:17px;border:1px solid #3a7070;background:#fff"></div><svg class="ic" style="left:1137px;top:759px" width="4" height="7" viewBox="0 0 4 7"><path d="M0 0 L4 3.5 L0 7 Z" fill="#3d6f6f"/></svg><div class="a tab" style="left:7px;top:90px;width:149px">Kontakte des Vorgangs (52)</div><div class="a" style="left:161px;top:90px;height:20px;line-height:22px;color:#4c7878;letter-spacing:-0.43px">Alle Kontaktpersonen (821)</div><div class="a tab" style="left:584px;top:90px;width:129px">Ausgewählte Daten (18)</div><div class="a" style="left:0px;top:0px;width:1154px;height:778px;border:1px solid #5a5e5c"></div></body></html>
